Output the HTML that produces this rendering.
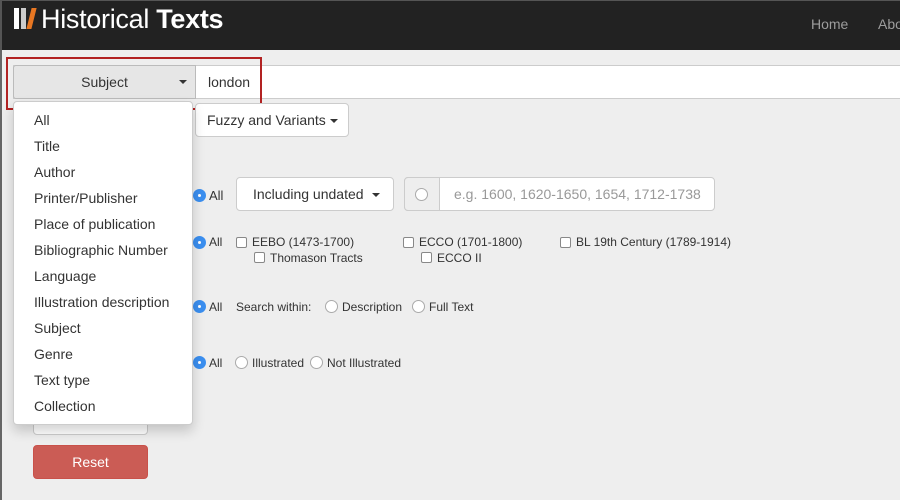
<!DOCTYPE html>
<html><head><style>
*{box-sizing:border-box;margin:0;padding:0}
body{width:900px;height:500px;overflow:hidden;background:#eee;font-family:"Liberation Sans",sans-serif;position:relative;color:#333}
.a{position:absolute}
.hdr{left:0;top:0;width:900px;height:50px;background:#222;border-top:1px solid #555;border-left:2px solid #555}
.lb{left:0;top:50px;width:2px;height:450px;background:#666}
.t{font-size:13px;white-space:nowrap}
.rad{width:13px;height:13px;border-radius:50%;border:1px solid #aaa;background:#fff}
.rad.on{background:#3b8ff0;border-color:#3b8ff0}
.rad.on:after{content:"";position:absolute;left:4px;top:4px;width:3px;height:3px;border-radius:50%;background:#fff}
.cb{width:11px;height:11px;border:1px solid #888;border-radius:2px;background:#fff}
.dd div{height:26px;line-height:26px;padding-left:20px;font-size:14px;color:#333}
.caret{display:inline-block;border-left:4px solid transparent;border-right:4px solid transparent;border-top:4px solid #333;vertical-align:middle;margin-left:4px}
</style></head><body>
<div class="a hdr"></div>
<div class="a lb"></div>
<div class="a" style="left:14px;top:8px;width:5px;height:21px;background:#fff"></div>
<div class="a" style="left:21px;top:8px;width:5px;height:21px;background:#ccc"></div>
<div class="a" style="left:29px;top:8px;width:5px;height:21px;background:#e87722;transform:skewX(-14deg)"></div>
<div class="a" style="left:41px;top:4px;font-size:27px;color:#fff;letter-spacing:-0.3px">Historical <b>Texts</b></div>
<div class="a" style="left:811px;top:16px;font-size:14px;color:#9d9d9d">Home</div>
<div class="a" style="left:878px;top:16px;font-size:14px;color:#9d9d9d">About</div>

<div class="a" style="left:13px;top:65px;width:887px;height:34px;background:#fff;border:1px solid #ccc;border-right:none"></div>
<div class="a" style="left:13px;top:65px;width:183px;height:34px;background:#e6e6e6;border:1px solid #bbb;border-radius:3px 0 0 3px;text-align:center;line-height:32px;font-size:14px">Subject<span class="caret" style="position:absolute;right:8px;top:14px"></span></div>
<div class="a" style="left:208px;top:74px;font-size:14px">london</div>
<div class="a" style="left:6px;top:57px;width:256px;height:53px;border:2px solid #b22222"></div>

<div class="a" style="left:195px;top:103px;width:154px;height:34px;background:#fff;border:1px solid #ccc;border-radius:4px;font-size:14px;line-height:32px;padding-left:11px">Fuzzy and Variants<span class="caret"></span></div>

<div class="a rad on" style="left:193px;top:189px"></div><div class="a t" style="left:209px;top:188px">All</div>
<div class="a" style="left:236px;top:177px;width:158px;height:34px;background:#fff;border:1px solid #ccc;border-radius:4px;font-size:14px;line-height:32px;padding-left:16px">Including undated<span class="caret" style="margin-left:8px"></span></div>
<div class="a" style="left:404px;top:177px;width:311px;height:34px;background:#fff;border:1px solid #ccc;border-radius:4px"></div>
<div class="a" style="left:404px;top:177px;width:36px;height:34px;background:#eee;border:1px solid #ccc;border-radius:4px 0 0 4px"></div>
<div class="a rad" style="left:415px;top:188px"></div>
<div class="a" style="left:454px;top:186px;font-size:14px;color:#999">e.g. 1600, 1620-1650, 1654, 1712-1738</div>

<div class="a rad on" style="left:193px;top:236px"></div><div class="a t" style="left:209px;top:235px;font-size:12px">All</div>
<div class="a cb" style="left:236px;top:237px"></div><div class="a t" style="left:252px;top:235px;font-size:12px">EEBO (1473-1700)</div>
<div class="a cb" style="left:254px;top:252px"></div><div class="a t" style="left:270px;top:251px;font-size:12px">Thomason Tracts</div>
<div class="a cb" style="left:403px;top:237px"></div><div class="a t" style="left:419px;top:235px;font-size:12px">ECCO (1701-1800)</div>
<div class="a cb" style="left:421px;top:252px"></div><div class="a t" style="left:437px;top:251px;font-size:12px">ECCO II</div>
<div class="a cb" style="left:560px;top:237px"></div><div class="a t" style="left:576px;top:235px;font-size:12px">BL 19th Century (1789-1914)</div>

<div class="a rad on" style="left:193px;top:300px"></div><div class="a t" style="left:209px;top:300px;font-size:12px">All</div>
<div class="a t" style="left:236px;top:300px;font-size:12px">Search within:</div>
<div class="a rad" style="left:325px;top:300px"></div><div class="a t" style="left:342px;top:300px;font-size:12px">Description</div>
<div class="a rad" style="left:412px;top:300px"></div><div class="a t" style="left:429px;top:300px;font-size:12px">Full Text</div>

<div class="a rad on" style="left:193px;top:356px"></div><div class="a t" style="left:209px;top:356px;font-size:12px">All</div>
<div class="a rad" style="left:235px;top:356px"></div><div class="a t" style="left:252px;top:356px;font-size:12px">Illustrated</div>
<div class="a rad" style="left:310px;top:356px"></div><div class="a t" style="left:327px;top:356px;font-size:12px">Not Illustrated</div>

<div class="a" style="left:33px;top:400px;width:115px;height:35px;background:#fff;border:1px solid #ccc;border-radius:4px"></div>
<div class="a" style="left:33px;top:445px;width:115px;height:34px;background:#cb5c55;border:1px solid #c9514a;border-radius:4px;color:#fff;font-size:14px;text-align:center;line-height:32px">Reset</div>

<div class="a dd" style="left:13px;top:101px;width:180px;height:324px;background:#fff;border:1px solid #ccc;border-radius:4px;box-shadow:0 6px 12px rgba(0,0,0,.18);padding-top:5px">
<div>All</div><div>Title</div><div>Author</div><div>Printer/Publisher</div><div>Place of publication</div><div>Bibliographic Number</div><div>Language</div><div>Illustration description</div><div>Subject</div><div>Genre</div><div>Text type</div><div>Collection</div>
</div>
</body></html>
